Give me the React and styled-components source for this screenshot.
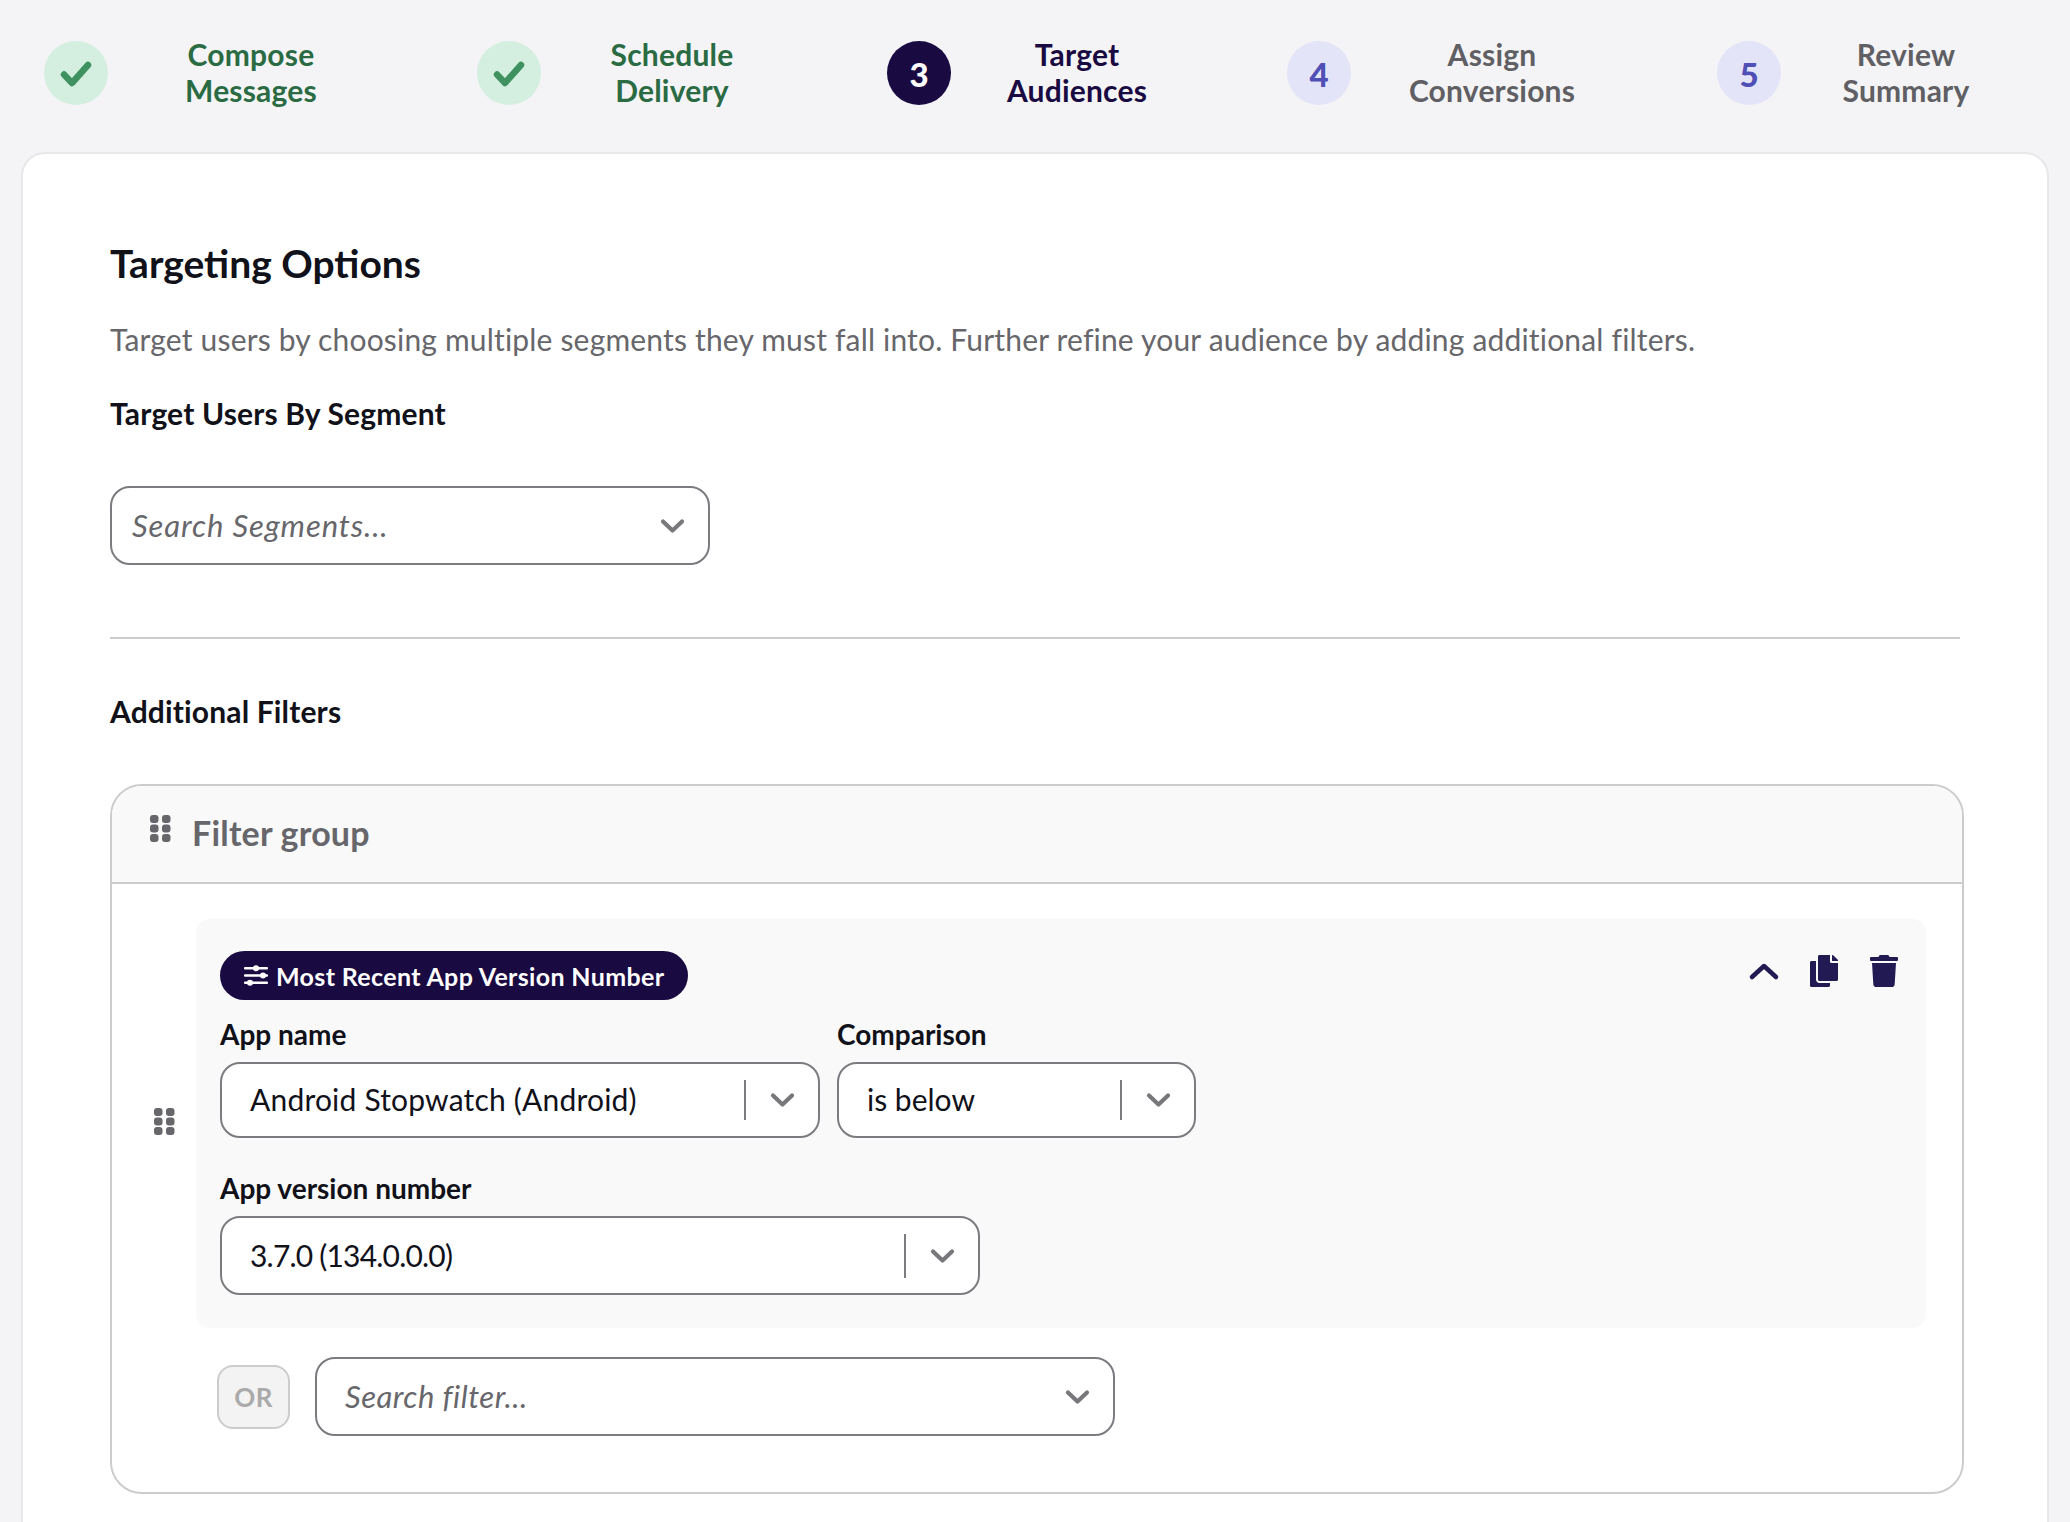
import styled, { createGlobalStyle } from 'styled-components'
import { FaCopy, FaTrash } from 'react-icons/fa'

const GlobalStyle = createGlobalStyle`
    * { box-sizing: border-box; }
    html, body { margin: 0; height: 100%; overflow: hidden; }
    body {
        background: #f4f4f6;
        font-family: "Lato", "Noto Sans", sans-serif;
        color: #11111a;
    }
`

const Page = styled.div`
    padding: 0 21px;
    height: 1522px;
    overflow: hidden;
`

const Stepper = styled.div`
    display: grid;
    grid-template-columns: 433px 410px 400px 430px 1fr;
    height: 152px;
    padding: 41px 0 0 23px;
`

const Step = styled.div`
    display: flex;
    align-items: center;
    height: 64px;
`

const Circle = styled.div`
    flex: none;
    width: 64px;
    height: 64px;
    border-radius: 50%;
    display: flex;
    align-items: center;
    justify-content: center;
    padding-top: 2px;
    font-size: 33px;
    font-weight: 900;
    background: ${({ state }) => state === 'done' ? '#d4eedf' : state === 'active' ? '#1a0a42' : '#e4e4f8'};
    color: ${({ state }) => state === 'active' ? '#fff' : '#4f4fb5'};
`

const StepLabel = styled.div`
    flex: none;
    width: ${({ w }) => w}px;
    padding-bottom: 2px;
    text-align: center;
    font-size: 30px;
    line-height: 36px;
    letter-spacing: 0.2px;
    font-weight: 700;
    color: ${({ state }) => state === 'done' ? '#2a6b44' : state === 'active' ? '#1a0a42' : '#5f5f64'};
`

const Card = styled.div`
    background: #fff;
    border: 2px solid #e8e8ea;
    border-radius: 24px;
    padding: 87px 83px 0 87px;
    min-height: 1400px;
`

const Title = styled.h1`
    margin: 0;
    font-size: 39px;
    line-height: 44px;
    font-weight: 700;
`

const Description = styled.p`
    margin: 34px 0 0;
    font-size: 30px;
    line-height: 40px;
    letter-spacing: 0.18px;
    color: #66666b;
`

const SectionLabel = styled.h2`
    margin: ${({ top }) => top}px 0 0;
    font-size: 30px;
    line-height: 36px;
    letter-spacing: 0.15px;
    font-weight: 700;
`

const SelectBox = styled.div`
    display: flex;
    align-items: center;
    width: ${({ w }) => w}px;
    height: ${({ h }) => h}px;
    flex: none;
    background: #fff;
    border: 2px solid #7b7b80;
    border-radius: 20px;
    padding-left: 28px;
    font-size: 30px;
    letter-spacing: 0.2px;
    color: #11111a;
`

const SegmentSelect = styled(SelectBox)`
    margin-top: 55px;
    padding-left: 20px;
`

const Placeholder = styled.span`
    flex: 1;
    padding-bottom: 2px;
    font-size: 31px;
    font-style: italic;
    letter-spacing: ${({ spacing }) => spacing}px;
    color: #66666b;
`

const Value = styled.span`
    flex: 1;
    padding-bottom: 2px;
    letter-spacing: ${({ spacing }) => spacing}px;
`

const Separator = styled.span`
    flex: none;
    width: 2px;
    height: ${({ h }) => h}px;
    background: #7b7b80;
`

const ChevronSlot = styled.span`
    flex: none;
    width: ${({ w }) => w}px;
    display: flex;
    justify-content: center;
    color: #77777c;
`

const Divider = styled.hr`
    margin: 72px 4px 0 0;
    border: 0;
    height: 2px;
    background: #ccc;
`

const FilterGroup = styled.div`
    margin-top: 55px;
    border: 2px solid #ccc;
    border-radius: 32px;
    overflow: hidden;
`

const GroupHeader = styled.div`
    display: flex;
    align-items: center;
    gap: 21px;
    height: 98px;
    padding: 0 0 4px 38px;
    background: #f9f9f9;
    border-bottom: 2px solid #ccc;
    font-size: 34px;
    letter-spacing: 0.2px;
    font-weight: 700;
    color: #66666b;
    > svg { margin-bottom: 8px; }
`

const GroupBody = styled.div`
    padding: 35px 36px 56px 42px;
`

const FilterRow = styled.div`
    display: flex;
    align-items: center;
    gap: 21px;
    > svg { margin-bottom: 5px; }
`

const FilterPanel = styled.div`
    flex: 1;
    background: #f9f9f9;
    border-radius: 14px;
    padding: 32px 26px 33px 24px;
`

const PanelTop = styled.div`
    display: flex;
    justify-content: space-between;
    align-items: flex-start;
`

const Badge = styled.div`
    display: inline-flex;
    align-items: center;
    gap: 8px;
    height: 49px;
    padding: 0 24px;
    border-radius: 25px;
    background: #1a0a42;
    color: #fff;
    font-size: 25px;
    letter-spacing: 0.35px;
    font-weight: 700;
`

const Actions = styled.div`
    display: flex;
    gap: 28px;
    margin-top: 4px;
    color: #221a52;
    svg { display: block; }
`

const FieldRow = styled.div`
    display: flex;
    gap: 17px;
    margin-top: ${({ top }) => top}px;
`

const Field = styled.div`
    display: flex;
    flex-direction: column;
`

const FieldLabel = styled.label`
    font-size: 28px;
    line-height: 34px;
    font-weight: 700;
    margin-bottom: ${({ gap }) => gap}px;
`

const OrRow = styled.div`
    display: flex;
    align-items: center;
    gap: 25px;
    margin: 29px 0 0 63px;
`

const OrButton = styled.div`
    width: 73px;
    height: 64px;
    display: flex;
    align-items: center;
    justify-content: center;
    background: #f3f3f3;
    border: 2px solid #ccc;
    border-radius: 16px;
    font-size: 26px;
    letter-spacing: 0.5px;
    font-weight: 700;
    color: #aaa;
`

const Check = () => (
    <svg width="32" height="26" viewBox="0 0 32 26" fill="none" stroke="#3f9260" strokeWidth="6.5" strokeLinecap="round" strokeLinejoin="round">
        <path d="M4 13.5l8 8.5L28 4" />
    </svg>
)

const Chevron = () => (
    <svg width="25" height="16" viewBox="0 0 25 16" fill="none" stroke="currentColor" strokeWidth="4.2" strokeLinecap="round" strokeLinejoin="round">
        <path d="M3 3.5l9.5 9 9.5-9" />
    </svg>
)

const ChevronUp = () => (
    <svg width="32" height="32" viewBox="0 0 32 32" fill="none" stroke="currentColor" strokeWidth="4.5" strokeLinecap="round" strokeLinejoin="round">
        <path d="M4 22l12-11 12 11" />
    </svg>
)

const Grip = () => (
    <svg width="21" height="27" viewBox="0 0 21 27" fill="#66666b">
        <rect x="0" y="0" width="8.5" height="8" rx="3" />
        <rect x="12" y="0" width="8.5" height="8" rx="3" />
        <rect x="0" y="9.5" width="8.5" height="8" rx="3" />
        <rect x="12" y="9.5" width="8.5" height="8" rx="3" />
        <rect x="0" y="19" width="8.5" height="8" rx="3" />
        <rect x="12" y="19" width="8.5" height="8" rx="3" />
    </svg>
)

const Tune = () => (
    <svg width="24" height="21" viewBox="0 0 24 21" fill="#fff">
        <rect x="0" y="2" width="24" height="2.6" rx="1" />
        <rect x="0" y="9.2" width="24" height="2.6" rx="1" />
        <rect x="0" y="16.4" width="24" height="2.6" rx="1" />
        <circle cx="12" cy="3.3" r="3" />
        <circle cx="19" cy="10.5" r="3" />
        <circle cx="6" cy="17.7" r="3" />
    </svg>
)

const steps = [
    { label: ['Compose', 'Messages'], state: 'done', w: 286 },
    { label: ['Schedule', 'Delivery'], state: 'done', w: 262 },
    { label: ['Target', 'Audiences'], state: 'active', n: 3, w: 252 },
    { label: ['Assign', 'Conversions'], state: 'todo', n: 4, w: 282 },
    { label: ['Review', 'Summary'], state: 'todo', n: 5, w: 250 },
]

const App = () => {
    return (
        <Page>
            <GlobalStyle />
            <Stepper>
                {steps.map((s) => (
                    <Step key={s.label[0]}>
                        <Circle state={s.state}>{s.state === 'done' ? <Check /> : s.n}</Circle>
                        <StepLabel state={s.state} w={s.w}>{s.label[0]}<br />{s.label[1]}</StepLabel>
                    </Step>
                ))}
            </Stepper>
            <Card>
                <Title>Targeting Options</Title>
                <Description>Target users by choosing multiple segments they must fall into. Further refine your audience by adding additional filters.</Description>
                <SectionLabel top={36}>Target Users By Segment</SectionLabel>
                <SegmentSelect w={600} h={79}>
                    <Placeholder spacing={0.9}>Search Segments...</Placeholder>
                    <ChevronSlot w={71}><Chevron /></ChevronSlot>
                </SegmentSelect>
                <Divider />
                <SectionLabel top={54}>Additional Filters</SectionLabel>
                <FilterGroup>
                    <GroupHeader><Grip />Filter group</GroupHeader>
                    <GroupBody>
                        <FilterRow>
                            <Grip />
                            <FilterPanel>
                                <PanelTop>
                                    <Badge><Tune />Most Recent App Version Number</Badge>
                                    <Actions>
                                        <ChevronUp />
                                        <FaCopy size={32} />
                                        <FaTrash size={32} />
                                    </Actions>
                                </PanelTop>
                                <FieldRow top={17}>
                                    <Field>
                                        <FieldLabel gap={11}>App name</FieldLabel>
                                        <SelectBox w={600} h={76}>
                                            <Value spacing={0.2}>Android Stopwatch (Android)</Value>
                                            <Separator h={40} />
                                            <ChevronSlot w={72}><Chevron /></ChevronSlot>
                                        </SelectBox>
                                    </Field>
                                    <Field>
                                        <FieldLabel gap={11}>Comparison</FieldLabel>
                                        <SelectBox w={359} h={76}>
                                            <Value spacing={0}>is below</Value>
                                            <Separator h={40} />
                                            <ChevronSlot w={72}><Chevron /></ChevronSlot>
                                        </SelectBox>
                                    </Field>
                                </FieldRow>
                                <FieldRow top={33}>
                                    <Field>
                                        <FieldLabel gap={11}>App version number</FieldLabel>
                                        <SelectBox w={760} h={79}>
                                            <Value spacing={-0.8}>3.7.0 (134.0.0.0)</Value>
                                            <Separator h={44} />
                                            <ChevronSlot w={72}><Chevron /></ChevronSlot>
                                        </SelectBox>
                                    </Field>
                                </FieldRow>
                            </FilterPanel>
                        </FilterRow>
                        <OrRow>
                            <OrButton>OR</OrButton>
                            <SelectBox w={800} h={79}>
                                <Placeholder spacing={0.5}>Search filter...</Placeholder>
                                <ChevronSlot w={72}><Chevron /></ChevronSlot>
                            </SelectBox>
                        </OrRow>
                    </GroupBody>
                </FilterGroup>
            </Card>
        </Page>
    )
}

export default App
